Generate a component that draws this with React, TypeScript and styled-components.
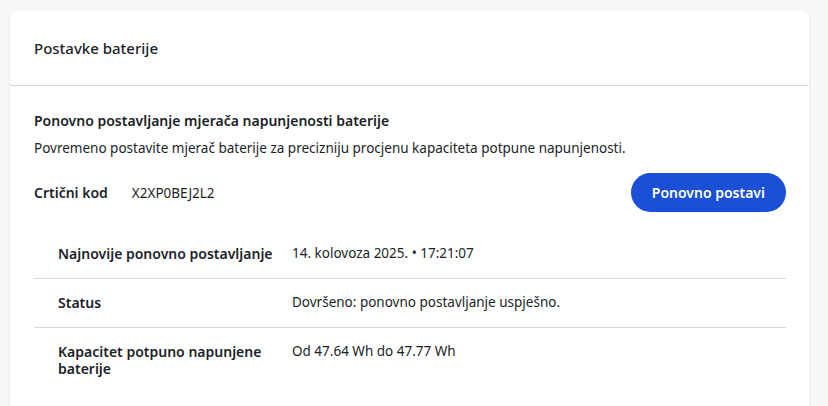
import React from "react";
import styled, { createGlobalStyle } from "styled-components";

const Global = createGlobalStyle`
  html, body { margin: 0; padding: 0; background: #f7f8fa; }
  body { font-family: "Noto Sans", "Open Sans", sans-serif; color: #1b1f29; }
`;

const Page = styled.div`
  padding: 10px 19px 0 10px;
  height: 406px;
  box-sizing: border-box;
  overflow: hidden;
`;

const Card = styled.section`
  background: #ffffff;
  border-radius: 8px 8px 0 0;
  box-shadow: 0 1px 3px rgba(20, 30, 50, 0.12);
  height: 420px;
`;

const Header = styled.header`
  height: 76px;
  display: flex;
  align-items: center;
  padding: 0 24px;
  border-bottom: 1px solid #d5d8e0;
  box-sizing: border-box;
`;

const HeaderTitle = styled.h2`
  margin: 0;
  font-size: 15px;
  font-weight: 500;
`;

const Body = styled.div`
  padding: 25px 23px 0 24px;
`;

const SectionTitle = styled.h3`
  margin: 0;
  font-size: 14px;
  font-weight: 600;
  line-height: 20px;
`;

const Desc = styled.p`
  margin: 7px 0 0;
  font-size: 13.5px;
  line-height: 20px;
`;

const CodeRow = styled.div`
  margin-top: 15px;
  display: flex;
  align-items: center;
  justify-content: space-between;
`;

const CodeGroup = styled.div`
  display: flex;
  align-items: center;
  gap: 24px;
  font-size: 13.5px;
`;

const CodeLabel = styled.span`
  font-weight: 600;
  font-size: 14px;
`;

const Button = styled.button`
  height: 39px;
  padding: 0 21px;
  border: none;
  border-radius: 20px;
  background: #1a4fd6;
  color: #ffffff;
  font-family: inherit;
  font-size: 14px;
  font-weight: 600;
  cursor: pointer;
`;

const Table = styled.dl`
  margin: 22px 0 0;
`;

const Row = styled.div`
  display: grid;
  grid-template-columns: 234px 1fr;
  padding: 11px 24px 16px;
  line-height: 17px;
  & + & {
    border-top: 1px solid #d5d8e0;
    padding-top: 15px;
  }
`;

const Term = styled.dt`
  font-size: 14px;
  font-weight: 600;
  padding-right: 8px;
`;

const Value = styled.dd`
  margin: 0;
  font-size: 13.5px;
`;

const rows = [
  { k: "Najnovije ponovno postavljanje", v: "14. kolovoza 2025. • 17:21:07" },
  { k: "Status", v: "Dovršeno: ponovno postavljanje uspješno." },
  { k: "Kapacitet potpuno napunjene baterije", v: "Od 47.64 Wh do 47.77 Wh" },
];

export default function App() {
  return (
    <>
      <Global />
      <Page>
        <Card>
          <Header>
            <HeaderTitle>Postavke baterije</HeaderTitle>
          </Header>
          <Body>
            <SectionTitle>Ponovno postavljanje mjerača napunjenosti baterije</SectionTitle>
            <Desc>
              Povremeno postavite mjerač baterije za precizniju procjenu kapaciteta potpune napunjenosti.
            </Desc>
            <CodeRow>
              <CodeGroup>
                <CodeLabel>Crtični kod</CodeLabel>
                <span>X2XP0BEJ2L2</span>
              </CodeGroup>
              <Button>Ponovno postavi</Button>
            </CodeRow>
            <Table>
              {rows.map((r) => (
                <Row key={r.k}>
                  <Term>{r.k}</Term>
                  <Value>{r.v}</Value>
                </Row>
              ))}
            </Table>
          </Body>
        </Card>
      </Page>
    </>
  );
}
